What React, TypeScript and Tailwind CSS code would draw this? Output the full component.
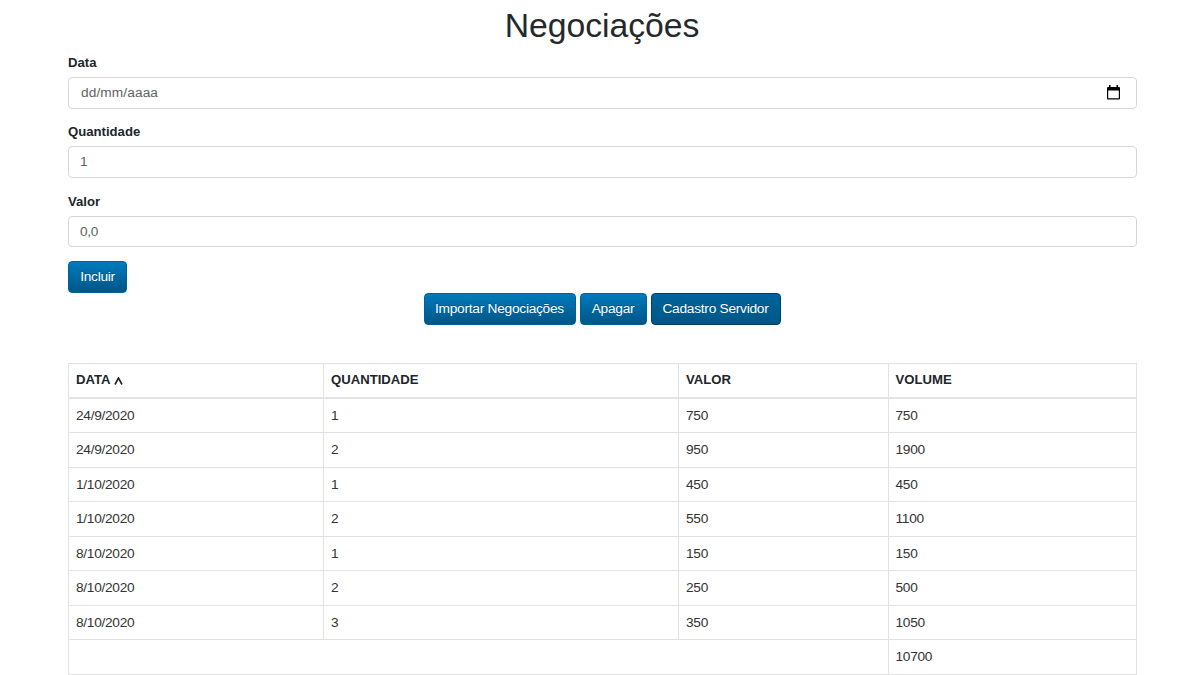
import type { ReactNode } from 'react';

const rows = [
  ['24/9/2020', '1', '750', '750'],
  ['24/9/2020', '2', '950', '1900'],
  ['1/10/2020', '1', '450', '450'],
  ['1/10/2020', '2', '550', '1100'],
  ['8/10/2020', '1', '150', '150'],
  ['8/10/2020', '2', '250', '500'],
  ['8/10/2020', '3', '350', '1050'],
];

function Field({ label, children }: { label: string; children: ReactNode }) {
  return (
    <div className="h-[69.33px]">
      <div className="h-6 pt-px text-[13.13px] leading-[17px] font-bold tracking-normal text-[#212529]">{label}</div>
      <div className="flex h-[31.5px] items-center justify-between rounded-[4px] border border-[#d6d6d6] px-[11px] text-[#626262]">
        {children}
      </div>
    </div>
  );
}

function Button({ children, className }: { children: ReactNode; className: string }) {
  return (
    <button
      className={`flex h-8 items-center justify-center rounded-[4px] border whitespace-nowrap text-white [text-shadow:0_-1px_0_rgba(0,0,0,0.2)] ${className}`}
    >
      {children}
    </button>
  );
}

function CalendarIcon() {
  return (
    <svg width="13" height="15" viewBox="0 0 13 15" className="mr-[5px]">
      <path
        fill="#000"
        d="M1 2h1V0h1.5v2h6V0H11v2h1q1 0 1 1v10.5q0 1-1 1H1q-1 0-1-1V3q0-1 1-1ZM1.2 5.5v7.8h10.6V5.5z"
        fillRule="evenodd"
      />
    </svg>
  );
}

const cell = 'flex items-center border-l border-[#e2e2e2] px-[7px]';
const blue = 'border-[#00609a] bg-linear-to-b from-[#007abc] to-[#005686]';

export default function App() {
  return (
    <div className="h-[675px] overflow-hidden bg-white font-['Liberation_Sans',Arial,sans-serif] text-[13.7px] leading-[18px] tracking-[-0.29px] text-[#333]">
      <main className="ml-[68px] w-[1069px]">
        <h1 className="h-[53px] pt-[6px] pr-px text-center text-[33.75px] leading-[38px] tracking-[-0.05px] text-[#25292b]">Negociações</h1>
        <Field label="Data">
          <span className="pl-px tracking-[0.1px]">dd/mm/aaaa</span>
          <CalendarIcon />
        </Field>
        <Field label="Quantidade">
          <span>1</span>
        </Field>
        <Field label="Valor">
          <span className="pt-px">0,0</span>
        </Field>
        <Button className={`w-[59px] ${blue}`}>Incluir</Button>
        <div className="flex justify-center gap-1 pr-px tracking-[-0.25px]">
          <Button className={`w-[152px] ${blue}`}>Importar Negociações</Button>
          <Button className={`w-[67px] ${blue}`}>Apagar</Button>
          <Button className="w-[130px] border-[#003f67] bg-linear-to-b from-[#00649c] to-[#005686]">Cadastro Servidor</Button>
        </div>
        <div className="mt-[38px] border-t border-r border-[#e2e2e2]">
          <div className="grid h-[35px] grid-cols-[255px_355px_209.5px_1fr] border-b-2 border-[#e4e4e4] text-[13.13px] font-bold tracking-normal text-[#212529]">
            <div className={cell}>
              DATA
              <svg width="9" height="8" viewBox="0 0 9 8" className="mt-[2px] ml-[3px]">
                <path d="M1 7.5 4.5 1 8 7.5" fill="none" stroke="#222" strokeWidth="1.6" />
              </svg>
            </div>
            <div className={cell}>QUANTIDADE</div>
            <div className={cell}>VALOR</div>
            <div className={cell}>VOLUME</div>
          </div>
          {rows.map((row, i) => (
            <div key={i} className="grid h-[34.5px] grid-cols-[255px_355px_209.5px_1fr] border-b border-[#e2e2e2]">
              {row.map((value, j) => (
                <div key={j} className={cell}>{value}</div>
              ))}
            </div>
          ))}
          <div className="grid h-[34.5px] grid-cols-[819.5px_1fr] border-b border-[#e2e2e2]">
            <div className={cell} />
            <div className={cell}>10700</div>
          </div>
        </div>
      </main>
    </div>
  );
}
